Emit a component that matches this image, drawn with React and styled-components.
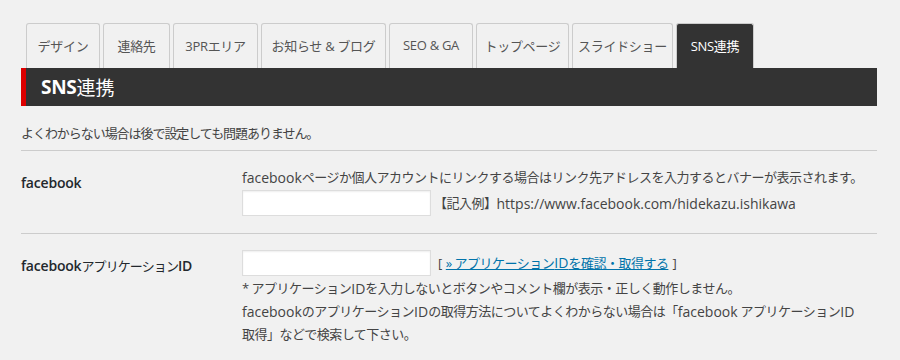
import React from "react";
import styled, { createGlobalStyle } from "styled-components";

const Global = createGlobalStyle`
  html, body { margin: 0; padding: 0; background: #f1f1f1; }
  body {
    font-family: "Open Sans", "Noto Sans CJK JP", sans-serif;
    color: #444;
    font-size: 13px;
  }
`;

const Page = styled.div`
  width: 856px;
  padding: 23px 0 0 21px;
  box-sizing: content-box;
`;

const TabBar = styled.div`
  display: flex;
  gap: 3px;
  padding-left: 5px;
  height: 45px;
`;

const Tab = styled.div`
  box-sizing: border-box;
  width: ${(p) => p.$w}px;
  height: 45px;
  display: flex;
  align-items: center;
  justify-content: center;
  border: 1px solid #ccc;
  border-bottom: none;
  border-radius: 3px 3px 0 0;
  background: ${(p) => (p.$active ? "#333" : "#f1f1f1")};
  color: ${(p) => (p.$active ? "#fff" : "#555")};
  font-size: 13px;
  white-space: nowrap;
  padding-bottom: 2px;
  letter-spacing: -0.3px;
`;

const Header = styled.h2`
  margin: 0;
  height: 38px;
  background: #333;
  border-left: 5px solid #d00;
  color: #fff;
  font-size: 19px;
  font-weight: 400;
  display: flex;
  align-items: center;
  padding-left: 15px;
  box-sizing: border-box;
`;

const Strong = styled.span`
  font-weight: 700;
  letter-spacing: -0.3px;
`;

const Intro = styled.p`
  margin: 0;
  padding: 17px 0 7px;
  font-size: 13px;
  line-height: 20px;
  letter-spacing: -1.05px;
`;

const Row = styled.div`
  display: grid;
  grid-template-columns: 221px 1fr;
  border-top: 1px solid #ccc;
  padding: 15px 0 16px;
`;

const Label = styled.div`
  font-size: 14px;
  font-weight: 600;
  color: #23282d;
  padding-top: ${(p) => p.$top}px;
  line-height: 20px;
  letter-spacing: -0.2px;
`;

const LabelJa = styled.span`
  font-weight: 400;
  font-size: 13px;
  letter-spacing: -0.9px;
`;

const Field = styled.div`
  display: flex;
  flex-direction: column;
  font-size: 13px;
  line-height: 23px;
  letter-spacing: -0.5px;
`;

const Latin = styled.span`
  font-size: 14px;
  letter-spacing: 0;
`;

const Line = styled.div`
  display: flex;
  align-items: center;
  white-space: pre;
`;

const Input = styled.input`
  box-sizing: border-box;
  width: 189px;
  height: 26px;
  margin: 1px 3px 1px 0;
  background: #fff;
  border: 1px solid #ddd;
  box-shadow: inset 0 1px 2px rgba(0, 0, 0, 0.07);
  outline: none;
`;

const Link = styled.a`
  color: #0073aa;
  text-decoration: underline;
  margin: 0 4px;
`;

const Bracket = styled.span`
  margin-left: 4px;
`;

const tabs = [
  ["デザイン", 74],
  ["連絡先", 67],
  ["3PRエリア", 85],
  ["お知らせ & ブログ", 125],
  ["SEO & GA", 84],
  ["トップページ", 93],
  ["スライドショー", 101],
  ["SNS連携", 78, true],
];

export default function App() {
  return (
    <>
      <Global />
      <Page>
        <TabBar>
          {tabs.map(([t, w, a]) => (
            <Tab key={t} $w={w} $active={a}>
              {t}
            </Tab>
          ))}
        </TabBar>
        <Header>
          <Strong>SNS</Strong>連携
        </Header>
        <Intro>よくわからない場合は後で設定しても問題ありません。</Intro>
        <Row>
          <Label $top={7}>facebook</Label>
          <Field>
            <Line>
              <Latin>facebook</Latin>ページか個人アカウントにリンクする場合はリンク先アドレスを入力するとバナーが表示されます。
            </Line>
            <Line>
              <Input type="text" />
              【記入例】<Latin>https://www.facebook.com/hidekazu.ishikawa</Latin>
            </Line>
          </Field>
        </Row>
        <Row>
          <Label $top={7}>
            facebook<LabelJa>アプリケーション</LabelJa>ID
          </Label>
          <Field>
            <Line>
              <Input type="text" />
              <Bracket>[</Bracket>
              <Link href="#">» アプリケーション<Latin>ID</Latin>を確認・取得する</Link>]
            </Line>
            <Line>
              * アプリケーション<Latin>ID</Latin>を入力しないとボタンやコメント欄が表示・正しく動作しません。
            </Line>
            <Line>
              <Latin>facebook</Latin>のアプリケーション<Latin>ID</Latin>の取得方法についてよくわからない場合は「<Latin>facebook</Latin> アプリケーション<Latin>ID</Latin>
            </Line>
            <Line>取得」などで検索して下さい。</Line>
          </Field>
        </Row>
      </Page>
    </>
  );
}
